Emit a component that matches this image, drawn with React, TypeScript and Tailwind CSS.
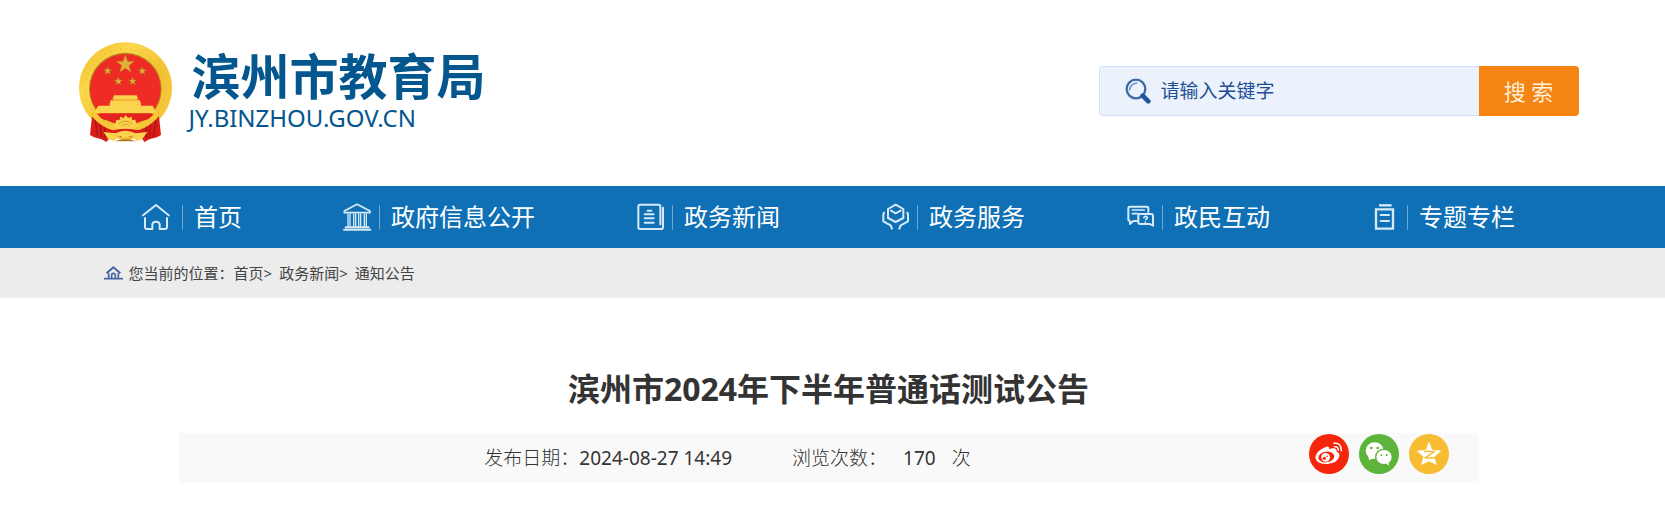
import type { ReactNode } from "react";

const sans = "font-['Noto_Sans','Noto_Sans_CJK_SC',sans-serif]";

function Star({ x, y, r }: { x: number; y: number; r: number }) {
  const points = Array.from({ length: 10 }, (_, i) => {
    const radius = i % 2 === 0 ? r : r * 0.4;
    const a = (Math.PI / 5) * i - Math.PI / 2;
    return `${x + radius * Math.cos(a)},${y + radius * Math.sin(a)}`;
  }).join(" ");
  return <polygon points={points} fill="#e0b03a" stroke="#b5701c" strokeWidth="1.5" />;
}

function Emblem() {
  return (
    <svg viewBox="27 18 279 300" className="h-[100px] w-[93px] shrink-0" aria-hidden="true">
      <defs>
        <linearGradient id="gold" x1="0" y1="0" x2="1" y2="1">
          <stop offset="0" stopColor="#eebb2c" />
          <stop offset="0.3" stopColor="#fbd84a" />
          <stop offset="0.6" stopColor="#f2c233" />
          <stop offset="1" stopColor="#f7cb3c" />
        </linearGradient>
      </defs>
      <ellipse cx="166.500" cy="156" rx="139.500" ry="137" fill="url(#gold)" />
      <ellipse cx="166" cy="157" rx="120" ry="118" fill="none" stroke="#dca526" strokeWidth="4" strokeDasharray="5 11" opacity="0.35" />
      <circle cx="166" cy="159" r="109" fill="#b8861f" />
      <circle cx="166" cy="160" r="106" fill="#ee2b24" />
      <Star x={166} y={85} r={29} />
      <Star x={113} y={105} r={13} />
      <Star x={217} y={105} r={13} />
      <Star x={145} y={136} r={13} />
      <Star x={188} y={136} r={13} />
      <path d="M132 178h68l4 10-4 4h9l4 11v7H119v-7l4-11h9l-4-4z" fill="#fbd24b" />
      <path d="M126 192h80" stroke="#d9822a" strokeWidth="2" />
      <path d="M86 209h162l7 14v9H75v-9z" fill="#fad44d" />
      <path d="M80 233h172l-12 14q-14 8-34 10l-36-8-40 10-34-10z" fill="#e3231d" />
      <path d="M67 232l32 22q24 22 42 26l-32 38-14-8-11-3-12-3-12-7z" fill="#d91d17" />
      <path d="M266 232l-32 22q-24 22-42 26l32 38 14-8 11-3 12-3 12-7z" fill="#d91d17" />
      <path d="M75 247l8 56M91 256l3 50M105 266l-2 42M258 247l-8 56M242 256l-3 50M228 266l2 42" stroke="#9f0f10" strokeWidth="3" fill="none" />
      <path d="M68 232q38 48 98 48t98-48" fill="none" stroke="#f4c638" strokeWidth="15" />
      <path d="M136 263l3-12 9 2 3-11 10 4 6-9 7 9 10-4 3 11 9-2 3 12 9 5-18 12h-48l-16-12z" fill="#fad34c" />
      <path d="M145 264q21-18 42 0M154 270q13-12 25 0" fill="none" stroke="#dc9b25" strokeWidth="3" />
      <path d="M122 284q44-12 88 0l-14 22h-60z" fill="#df2019" />
      <path d="M100 288l36 4q30-16 61 0l35-4-15 21-17 6-17-16-17 11-16-11-18 16-17-6z" fill="#f9d34e" />
      <path d="M136 296q30 16 60 0l-8 12q-22 13-42 0z" fill="#f1bd35" />
      <path d="M134 316q32-12 65 0z" fill="#a97720" />
    </svg>
  );
}

// Every nav drawing sits in a 40px slot that ends at the divider.
function NavIcon({ children }: { children: ReactNode }) {
  return (
    <svg
      viewBox="0 0 120 84"
      className="h-7 w-10"
      fill="none"
      stroke="#d6eafa"
      strokeWidth="6"
      strokeLinecap="round"
      strokeLinejoin="round"
      aria-hidden="true"
    >
      {children}
    </svg>
  );
}

const navItems = [
  {
    label: "首页",
    icon: (
      <>
        <path d="M3 37L42 6l38 31" />
        <path d="M9 45v27q0 6 6 6h16V65q0-9 11-9t11 9v13h15q7 0 7-6V45" />
      </>
    ),
  },
  {
    label: "政府信息公开",
    icon: (
      <>
        <path d="M16 24L54 4l39 20v5H16z" strokeWidth="5" />
        <path d="M27 33v37M33 33v37M44 33v37M50 33v37M59 33v37M65 33v37M76 33v37M82 33v37" strokeWidth="4" />
        <path d="M20 73h69M15 80h79" />
      </>
    ),
  },
  {
    label: "政务新闻",
    icon: (
      <>
        <path d="M85 64V10q0-5-5-5H24q-5 0-5 5v62q0 6 5 6h64q5 0 5-6V14" />
        <path d="M47 23h11M38 34h27M38 46h27M38 59h27" />
      </>
    ),
  },
  {
    label: "政务服务",
    icon: (
      <>
        <path d="M56 5l23 13v27L56 57 33 45V18zM42 23l14 8 15-8" />
        <path d="M21 29l-2 5v21l22 12 4 10M91 29l2 5v21L71 67l-4 10" />
      </>
    ),
  },
  {
    label: "政民互动",
    icon: (
      <>
        <path d="M79 27V16q0-5-5-5H24q-5 0-5 5v33q0 5 5 5v9l10-9h11" />
        <path d="M31 21h36M31 32h17" strokeWidth="5" />
        <path d="M54 33h33q6 0 6 6v29l-9-5H54q-5 0-5-6V39q0-6 5-6z" />
        <path d="M66 44q0-4 5-4t5 4q0 3-5 6M70 57v1" strokeWidth="5" />
      </>
    ),
  },
  {
    label: "专题专栏",
    icon: (
      <>
        <path d="M36 7h38" strokeWidth="7" strokeLinecap="butt" />
        <path d="M27 19h51v58H27z" strokeWidth="7" strokeLinejoin="miter" />
        <path d="M41 36h25M41 54h25" />
      </>
    ),
  },
];

function SearchGlass() {
  return (
    <svg viewBox="0 0 78 78" className="size-[26px] shrink-0" fill="none" aria-hidden="true">
      <circle cx="33" cy="33" r="28" stroke="#3f6ca9" strokeWidth="7" />
      <path d="M14 35q3-18 21-20" stroke="#6f92c4" strokeWidth="5" strokeLinecap="round" />
      <path d="M53 53l17 17" stroke="#24539a" strokeWidth="14" strokeLinecap="round" />
    </svg>
  );
}

function Header() {
  return (
    <header className="pr-2">
      <div className="mx-auto flex max-w-[1500px] items-start justify-between">
        <a href="#" className="mt-[42px] mb-11 flex text-[#04568f]">
          <Emblem />
          <span className="ml-4 flex flex-col">
            <span className="mt-2 ml-1 font-['Liberation_Sans','Noto_Sans_CJK_SC',sans-serif] text-[49px] leading-[56px] font-bold">
              滨州市教育局
            </span>
            <span className="ml-px text-2xl leading-6">JY.BINZHOU.GOV.CN</span>
          </span>
        </a>
        <form className="mt-[66px] flex h-[50px] w-[480px]">
          <label className="flex flex-1 items-center gap-2.5 rounded-l border border-r-0 border-[#cfe2fb] bg-[#ebf2fb] pl-[25px]">
            <SearchGlass />
            <input
              type="text"
              aria-label="请输入关键字"
              placeholder="请输入关键字"
              className="w-full min-w-0 bg-transparent text-[19px] text-[#1f4e96] outline-none placeholder:text-[#1f4e96]"
            />
          </label>
          <button type="button" className="w-[100px] rounded-r bg-[#f68412] text-[22px] text-[#fff0dd]">
            搜 索
          </button>
        </form>
      </div>
    </header>
  );
}

function Nav() {
  return (
    <nav className="bg-[#1070b5] pr-2">
      <ul className="mx-auto flex h-[62px] max-w-[1470px] items-center justify-around">
        {navItems.map((item) => (
          <li key={item.label}>
            <a href="#" className="flex items-center text-2xl text-white">
              <NavIcon>{item.icon}</NavIcon>
              <span className="mr-[11px] h-[25px] w-px bg-[#6fa9d3]"></span>
              {item.label}
            </a>
          </li>
        ))}
      </ul>
    </nav>
  );
}

function Breadcrumb() {
  return (
    <div className="bg-[#ececec] pr-2">
      <div className="mx-auto flex h-[50px] max-w-[1500px] items-center pl-[25px] text-[15px] text-[#444]">
        <svg viewBox="0 0 57 42" className="mr-1.5 h-3.5 w-[19px]" fill="none" stroke="#40659f" strokeWidth="5" aria-hidden="true">
          <path d="M8 22L28 4l21 18" strokeWidth="6" />
          <path d="M14 22v15M43 22v15M23 37V27q0-5 5-5t6 5v10" />
          <path d="M0 38h57" />
        </svg>
        <span>您当前的位置：</span>
        <a href="#">首页</a>
        <span className="mr-[7px]">&gt;</span>
        <a href="#">政务新闻</a>
        <span className="mr-[7px]">&gt;</span>
        <a href="#">通知公告</a>
      </div>
    </div>
  );
}

function Share() {
  return (
    <div className="mt-px mr-[30px] flex gap-2.5">
      <a href="#" aria-label="微博">
        <svg viewBox="0 0 120 120" className="size-10">
          <circle cx="60" cy="60" r="60" fill="#f5260c" />
          <path
            d="M50 39q10-4 11 6 23-7 22 8 10 3 8 14-5 20-35 23-32 1-37-18 1-21 31-33z"
            fill="#fff"
          />
          <ellipse cx="52" cy="69" rx="24" ry="16" fill="#f5260c" transform="rotate(-7 52 69)" />
          <circle cx="50" cy="70" r="13" fill="#fff" />
          <circle cx="46" cy="73" r="5" fill="#f5260c" />
          <circle cx="54" cy="67" r="2.500" fill="#f5260c" />
          <path d="M75 28q22-3 22 22M77 38q11-1 11 11" fill="none" stroke="#fff" strokeWidth="4.500" strokeLinecap="round" />
        </svg>
      </a>
      <a href="#" aria-label="微信">
        <svg viewBox="0 0 120 120" className="size-10">
          <circle cx="60" cy="60" r="60" fill="#5cb43b" />
          <path d="M28 66l2 13 13-6z" fill="#fff" />
          <ellipse cx="47" cy="50" rx="27" ry="25" fill="#fff" />
          <circle cx="37" cy="42" r="4" fill="#5cb43b" />
          <circle cx="56" cy="42" r="4" fill="#5cb43b" />
          <ellipse cx="75" cy="69" rx="25" ry="23" fill="#fff" stroke="#5cb43b" strokeWidth="4" />
          <path d="M80 87l10 8-1-14z" fill="#fff" />
          <circle cx="67" cy="63" r="3" fill="#5cb43b" />
          <circle cx="83" cy="63" r="3" fill="#5cb43b" />
        </svg>
      </a>
      <a href="#" aria-label="QQ空间">
        <svg viewBox="0 0 120 120" className="size-10">
          <circle cx="60" cy="60" r="60" fill="#f6bc32" />
          <path
            d="M60 25l9 24 26 2-20 18 7 22-22-10-22 10 6-23-19-17 26-2z"
            fill="#fff"
            stroke="#fff"
            strokeWidth="2"
            strokeLinejoin="round"
          />
          <path d="M46 53q13-3 28 1L49 71q14 3 37-1" fill="none" stroke="#f6bc32" strokeWidth="4.500" />
        </svg>
      </a>
    </div>
  );
}

function Article() {
  return (
    <main className="pr-2">
      <div className="mx-auto max-w-[1300px] pt-[67px] text-[#333]">
        <h1 className="text-center text-[32px] leading-[48px] font-bold">滨州市2024年下半年普通话测试公告</h1>
        <div className="mt-5 flex h-[50px] bg-[#f9f9f9]">
          <p className="flex flex-1 items-center justify-center text-[19px] font-light">
            <span>
              发布日期：<span className="font-normal">2024-08-27 14:49</span>
            </span>
            <span className="ml-[60px]">浏览次数：</span>
            <span className="mx-4 font-normal">170</span>
            <span>次</span>
          </p>
          <div className="pl-8">
            <Share />
          </div>
        </div>
      </div>
    </main>
  );
}

export default function App() {
  return (
    <div className={`min-h-screen bg-white ${sans}`}>
      <Header />
      <Nav />
      <Breadcrumb />
      <Article />
    </div>
  );
}
